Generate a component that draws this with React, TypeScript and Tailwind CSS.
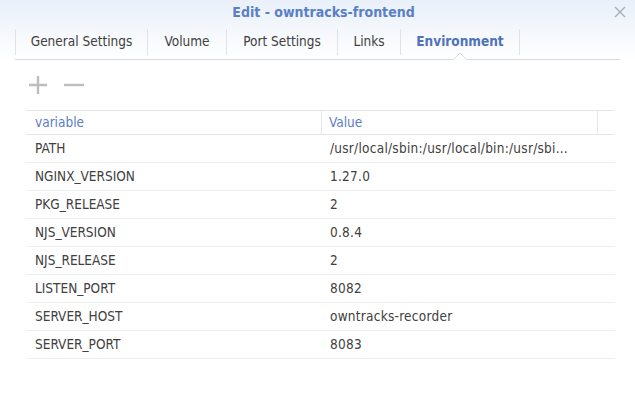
import React from "react";

const rows: [string, string][] = [
  ["PATH", "/usr/local/sbin:/usr/local/bin:/usr/sbi..."],
  ["NGINX_VERSION", "1.27.0"],
  ["PKG_RELEASE", "2"],
  ["NJS_VERSION", "0.8.4"],
  ["NJS_RELEASE", "2"],
  ["LISTEN_PORT", "8082"],
  ["SERVER_HOST", "owntracks-recorder"],
  ["SERVER_PORT", "8083"],
];

const tabs = ["General Settings", "Volume", "Port Settings", "Links", "Environment"];
const tabWidths = ["w-[133px]", "w-[79px]", "w-[111px]", "w-[63px]", "w-[119px]"];

export default function App() {
  return (
    <div
      className="w-[635px] h-[394px] overflow-hidden bg-white text-[13.5px] text-[#404040]"
      style={{ fontFamily: '"DejaVu Sans Condensed", "DejaVu Sans", Verdana, sans-serif' }}
    >
      <div className="bg-gradient-to-b from-[#e9f0f9] to-white">
        <div className="relative h-[24px] flex items-center justify-center pl-[12px]">
          <span className="text-[14px] font-bold text-[#5a7fc8]">Edit - owntracks-frontend</span>
          <svg className="absolute right-[9px] top-[6px]" width="12" height="12" viewBox="0 0 12 12">
            <path d="M1 1L11 11M11 1L1 11" stroke="#a9adb4" strokeWidth="1.4" />
          </svg>
        </div>
        <div className="mx-[15px] h-[36px] relative flex items-center border-b border-[#d8dadd]">
          {tabs.map((t, i) => (
            <div
              key={t}
              className={`${tabWidths[i]} h-[26px] flex items-center justify-center ${i === 0 ? "border-l border-[#e0e2e5]" : ""} border-r border-[#e0e2e5] ${
                t === "Environment" ? "font-bold text-[#4f72b8]" : "text-[#404040]"
              }`}
            >
              {t}
            </div>
          ))}
          <svg className="absolute left-[438px] bottom-[-1px]" width="14" height="8" viewBox="0 0 14 8">
            <path d="M0 8L7 1L14 8" fill="white" stroke="#d8dadd" strokeWidth="1" />
          </svg>
        </div>
      </div>
      <div className="mx-[26px] w-[589px]">
        <div className="h-[50px] flex items-center gap-[16px] pl-[2px]">
          <svg width="20" height="20" viewBox="0 0 20 20">
            <path d="M10 1V19M1 10H19" stroke="#bdbdbd" strokeWidth="2.4" />
          </svg>
          <svg width="20" height="20" viewBox="0 0 20 20">
            <path d="M0 10H20" stroke="#bdbdbd" strokeWidth="2.4" />
          </svg>
        </div>
        <div className="flex h-[25px] border-y border-[#e4e6e9] text-[#5a7dc4]">
          <div className="w-[296px] border-r border-[#e4e6e9] pl-[9px] flex items-center">variable</div>
          <div className="w-[276px] border-r border-[#e4e6e9] pl-[7px] flex items-center">Value</div>
          <div className="flex-1" />
        </div>
        {rows.map(([k, v]) => (
          <div key={k} className="flex h-[28px] border-b border-[#eceef0] items-center">
            <div className="w-[296px] pl-[9px]">{k}</div>
            <div className="w-[276px] pl-[8px] whitespace-nowrap tracking-[0.25px]">{v}</div>
          </div>
        ))}
      </div>
    </div>
  );
}
